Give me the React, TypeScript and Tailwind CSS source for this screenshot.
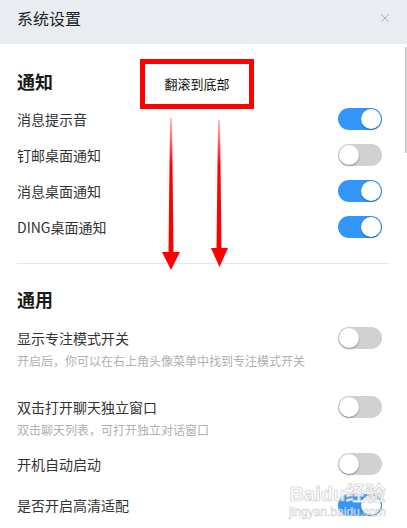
import { X } from 'lucide-react';

const font = { fontFamily: '"Noto Sans CJK SC", "Noto Sans", sans-serif' };

const Toggle = ({ on }: { on: boolean }) => (
  <div
    className={`relative h-[22px] w-[44px] shrink-0 rounded-full ${
      on ? 'bg-[#3296fa]' : 'bg-[#d1d1d1]'
    }`}
  >
    <div
      className={`absolute top-[1px] h-[20px] w-[20px] rounded-full bg-white shadow-[0_1px_2px_rgba(0,0,0,0.35)] ${
        on ? 'left-[23px]' : 'left-[1px]'
      }`}
    />
  </div>
);

const Row = ({ label, on, className = '' }: { label: string; on: boolean; className?: string }) => (
  <div className={`flex h-[36px] items-center justify-between pr-[7px] ${className}`}>
    <span className="text-[14px] text-[#333]">{label}</span>
    <Toggle on={on} />
  </div>
);

const Item = ({
  label,
  desc,
  on,
  className = '',
}: {
  label: string;
  desc?: string;
  on: boolean;
  className?: string;
}) => (
  <div className={className}>
    <div className="flex h-[32px] items-center justify-between pr-[7px]">
      <span className="text-[14px] text-[#333]">{label}</span>
      <Toggle on={on} />
    </div>
    {desc && <p className="text-[12px] leading-[14px] text-[#b0b0b0]">{desc}</p>}
  </div>
);

const App = () => {
  return (
    <div className="relative h-[528px] w-[407px] overflow-hidden bg-white" style={font}>
      <header className="flex h-[44px] items-center justify-between bg-[#e9edf2] pl-[17px] pr-[15px]">
        <h1 className="pb-[8px] text-[16px] text-[#222]">系统设置</h1>
        <X size={14} strokeWidth={1.2} className="mb-[8px] text-[#8f959b]" />
      </header>

      <main className="pl-[17px] pr-[18px]">
        <section className="pt-[18px]">
          <h2 className="flex h-[38px] items-center text-[18px] font-bold text-[#1a1a1a]">通知</h2>
          <Row label="消息提示音" on className="mt-[1px]" />
          <Row label="钉邮桌面通知" on={false} />
          <Row label="消息桌面通知" on />
          <Row label="DING桌面通知" on />
        </section>

        <div className="mt-[18px] h-px bg-[#e6e6e6]" />

        <section className="pt-[16px]">
          <h2 className="flex h-[38px] items-center text-[18px] font-bold text-[#1a1a1a]">通用</h2>
          <Item
            label="显示专注模式开关"
            desc="开启后，你可以在右上角头像菜单中找到专注模式开关"
            on={false}
            className="mt-[4px]"
          />
          <Item
            label="双击打开聊天独立窗口"
            desc="双击聊天列表，可打开独立对话窗口"
            on={false}
            className="mt-[23px]"
          />
          <Item label="开机自动启动" on={false} className="mt-[11px]" />
          <Item label="是否开启高清适配" on className="mt-[9px]" />
        </section>
      </main>

      {/* scrollbar */}
      <div className="absolute right-0 top-[47px] h-[106px] w-[2px] bg-[#cdcdcd]" />

      {/* annotation */}
      <div className="absolute left-[140px] top-[59px] flex h-[50px] w-[114px] items-center justify-center border-[5px] border-[#ff0000] bg-white">
        <span className="text-[13px] text-[#111]">翻滚到底部</span>
      </div>
      <svg className="absolute left-0 top-0" width="407" height="528" viewBox="0 0 407 528">
        <defs>
          <linearGradient id="fade" x1="0" y1="0" x2="0" y2="1">
            <stop offset="0" stopColor="#ff0000" stopOpacity="0.25" />
            <stop offset="0.35" stopColor="#ff0000" stopOpacity="1" />
            <stop offset="1" stopColor="#ff0000" stopOpacity="1" />
          </linearGradient>
        </defs>
        <polygon points="170,118 172,118 173.5,254 168.5,254" fill="url(#fade)" />
        <polygon points="162,252 180,252 171,270" fill="#ff0000" />
        <polygon points="218,120 220,120 221.5,250 216.5,250" fill="url(#fade)" />
        <polygon points="211,248 228,248 219.5,267" fill="#ff0000" />
      </svg>

      {/* watermark */}
      <div className="pointer-events-none absolute left-[289px] top-[483px] flex flex-col items-center whitespace-nowrap opacity-85">
        <span
          className="text-[20px] font-bold leading-[22px] text-white [-webkit-text-stroke:0.7px_#c4c4c4]"
          style={{ fontFamily: '"Liberation Sans", "Noto Sans CJK SC", sans-serif' }}
        >
          Baidu经验
        </span>
        <span
          className="text-[12px] leading-[14px] text-white [-webkit-text-stroke:0.5px_#c4c4c4]"
          style={{ fontFamily: '"Liberation Sans", sans-serif' }}
        >
          jingyan.baidu.com
        </span>
      </div>
    </div>
  );
};

export default App;
